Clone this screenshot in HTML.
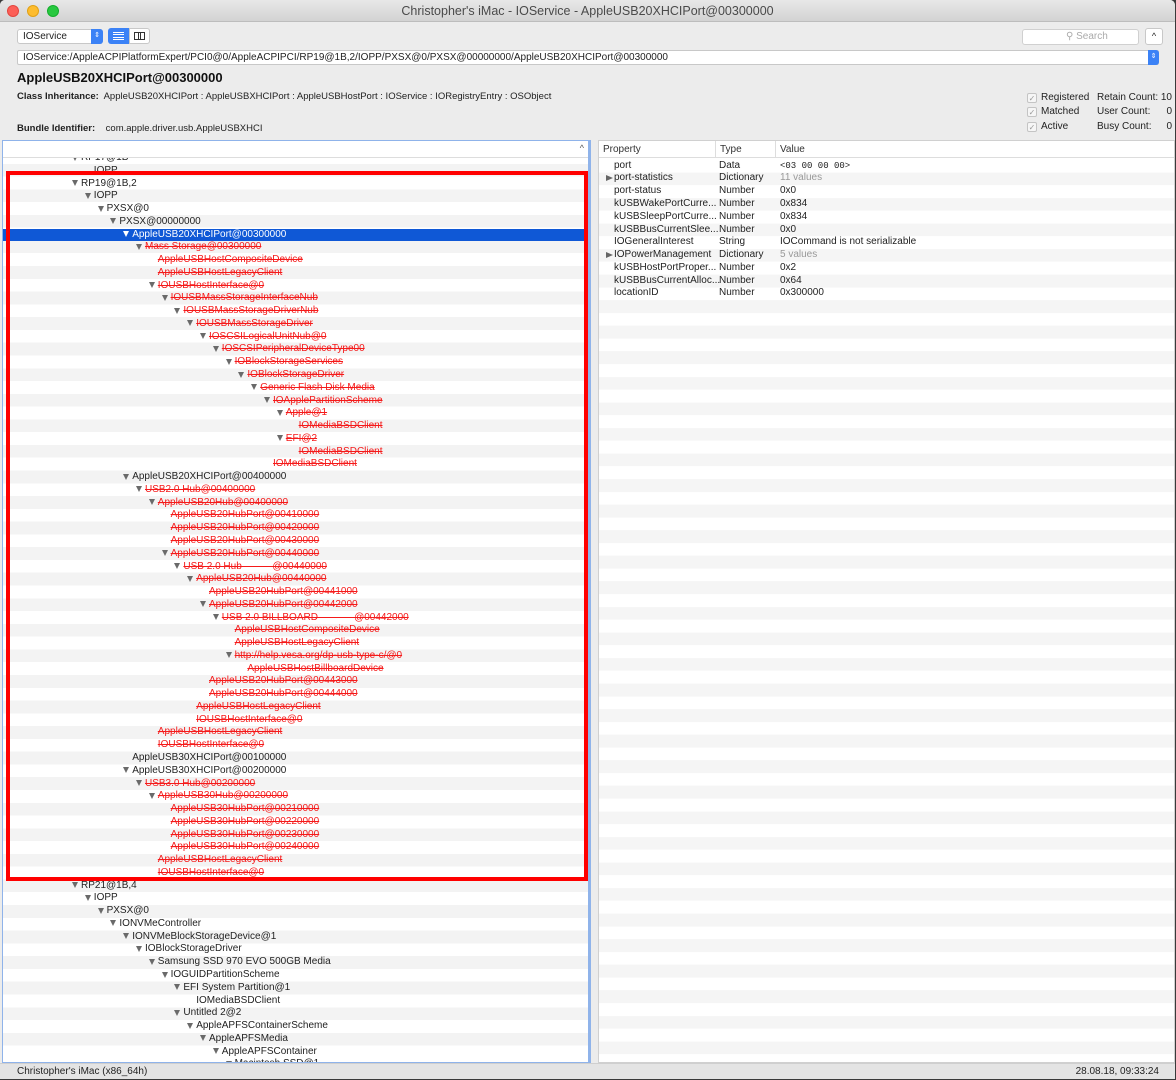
<!DOCTYPE html>
<html><head><meta charset="utf-8"><style>
*{margin:0;padding:0;box-sizing:border-box}
body{width:1176px;height:1080px;overflow:hidden;background:#3a3a3a;font-family:"Liberation Sans",sans-serif;font-size:10px;color:#222;position:relative}
.win{position:absolute;left:0;top:0;width:1175px;height:1079px;background:#ececec;border-radius:5px 5px 0 0;overflow:hidden}
.tb{position:absolute;left:0;top:0;width:100%;height:22px;background:linear-gradient(#e8e8e8,#d3d3d3);border-bottom:1px solid #bdbdbd;text-align:center;font-size:12.5px;line-height:22px;color:#4a4a4a}
.dot{position:absolute;top:5px;width:12px;height:12px;border-radius:50%}
.abs{position:absolute;white-space:nowrap}
.tree{position:absolute;left:2px;top:140px;width:589px;height:923px;background:#fff;border:1px solid #8fb3ea;border-right:3px solid #8fb3ea;overflow:hidden}
.thead{position:absolute;left:0;top:0;width:100%;height:17px;border-bottom:1px solid #ddd;background:#fff}
.tbody{position:absolute;left:0;top:17px;width:100%;height:905px;overflow:hidden;background:repeating-linear-gradient(#fff 0 12.78px,#f3f3f3 12.78px 25.56px);background-position:0 -7px}
.rows{position:absolute;left:-3px;top:-6px;width:100%}
.row{position:relative;height:12.78px;line-height:12.78px;white-space:nowrap;font-size:10px;color:#222}
.t{display:inline-block;position:relative;width:9px;height:12px;vertical-align:top;font-size:0;text-decoration:none}
.t:not(:empty)::before{content:"";position:absolute;left:0;top:2.5px;width:0;height:0;border-left:3.5px solid transparent;border-right:3.5px solid transparent;border-top:6.5px solid #6a6a6a}
.row.r{color:#f51a1a;text-decoration:line-through}
.sel{background:#0f58d6;color:#fff}
.sel .t:not(:empty)::before{border-top-color:#fff}
.l0{padding-left:72px}.l1{padding-left:84.8px}.l2{padding-left:97.6px}.l3{padding-left:110.4px}.l4{padding-left:123.2px}.l5{padding-left:136px}.l6{padding-left:148.8px}.l7{padding-left:161.6px}.l8{padding-left:174.4px}.l9{padding-left:187.2px}.l10{padding-left:200px}.l11{padding-left:212.8px}.l12{padding-left:225.6px}.l13{padding-left:238.4px}.l14{padding-left:251.2px}.l15{padding-left:264px}.l16{padding-left:276.8px}.l17{padding-left:289.6px}
.sel.l4{margin-left:3px;padding-left:120.2px}
.box{position:absolute;left:6px;top:171px;width:582px;height:710px;border:4px solid #f00}
.prop{position:absolute;left:598px;top:140px;width:577px;height:923px;background:#fff;border:1px solid #d0d0d0;overflow:hidden}
.phead{position:absolute;left:0;top:0;width:100%;height:17px;border-bottom:1px solid #ddd;background:#fff;font-size:10px;line-height:17px;color:#333}
.pbody{position:absolute;left:0;top:17px;width:100%;height:905px;background:repeating-linear-gradient(#fff 0 12.78px,#f5f5f5 12.78px 25.56px);background-position:0 1.6px}
.prow{position:absolute;left:0;width:100%;height:12.78px;line-height:12.78px;font-size:10px;white-space:nowrap}
.prow span{position:absolute}
.rt{position:absolute;left:7px;top:2.5px;width:0;height:0;border-top:3.5px solid transparent;border-bottom:3.5px solid transparent;border-left:7px solid #666}
.gray{color:#999}
.cb{display:inline-block;width:10px;height:10px;border:1px solid #c4c4c4;border-radius:2px;background:#f6f6f6;font-size:8px;line-height:9px;text-align:center;color:#999;margin-right:4px;vertical-align:-1px}
</style></head><body><div class="win">
<div class="tb">Christopher's iMac - IOService - AppleUSB20XHCIPort@00300000
<div class="dot" style="left:7px;background:#fc5f57;border:1px solid #e2463f"></div>
<div class="dot" style="left:27px;background:#fdbc2e;border:1px solid #e1a116"></div>
<div class="dot" style="left:47px;background:#28c840;border:1px solid #14ae2c"></div>
</div>
<div class="abs" style="left:17px;top:29px;width:86px;height:15px;background:#fff;border:1px solid #c8c8c8;border-radius:3px;font-size:10px;line-height:13px;padding-left:5px">IOService<div style="position:absolute;right:-1px;top:-1px;width:12px;height:15px;background:#3b82f6;border-radius:0 3px 3px 0;color:#fff;font-size:7px;line-height:14px;text-align:center">⇕</div></div>
<div class="abs" style="left:108px;top:28px;width:21px;height:16px;background:#3b82f6;border-radius:3px 0 0 3px"><div style="position:absolute;left:5px;top:4px;width:11px;height:8px;border-top:1px solid #fff;border-bottom:1px solid #fff"></div><div style="position:absolute;left:5px;top:6px;width:11px;border-top:1px solid #fff"></div><div style="position:absolute;left:5px;top:8.5px;width:11px;border-top:1px solid #fff"></div></div>
<div class="abs" style="left:129px;top:28px;width:21px;height:16px;background:#fff;border:1px solid #c8c8c8;border-radius:0 3px 3px 0"><div style="position:absolute;left:4px;top:3px;width:11px;height:8px;border:1px solid #333"></div><div style="position:absolute;left:8px;top:3px;width:3px;height:8px;border-left:1px solid #333;border-right:1px solid #333"></div></div>
<div class="abs" style="left:1022px;top:29px;width:117px;height:16px;background:#fff;border:1px solid #d0d0d0;border-radius:3px;color:#aaa;font-size:10px;line-height:14px;padding-left:43px">⚲ Search</div>
<div class="abs" style="left:1145px;top:28px;width:18px;height:17px;background:#fff;border:1px solid #c8c8c8;border-radius:3px;text-align:center;font-size:9px;line-height:15px">^</div>
<div class="abs" style="left:17px;top:50px;width:1142px;height:15px;background:#fff;border:1px solid #c8c8c8;border-radius:2px;font-size:10px;line-height:13px;padding-left:5px">IOService:/AppleACPIPlatformExpert/PCI0@0/AppleACPIPCI/RP19@1B,2/IOPP/PXSX@0/PXSX@00000000/AppleUSB20XHCIPort@00300000<div style="position:absolute;right:-1px;top:-1px;width:11px;height:15px;background:#3b82f6;border-radius:0 3px 3px 0;color:#fff;font-size:7px;line-height:14px;text-align:center">⇕</div></div>
<div class="abs" style="left:17px;top:70px;font-size:13px;font-weight:bold;color:#111">AppleUSB20XHCIPort@00300000</div>
<div class="abs" style="left:17px;top:91px;font-size:9.5px"><b>Class Inheritance:</b>&nbsp; AppleUSB20XHCIPort : AppleUSBXHCIPort : AppleUSBHostPort : IOService : IORegistryEntry : OSObject</div>
<div class="abs" style="left:17px;top:123px;font-size:9.5px"><b>Bundle Identifier:</b>&nbsp;&nbsp;&nbsp; com.apple.driver.usb.AppleUSBXHCI</div>
<div class="abs" style="left:1027px;top:91px;font-size:10px;line-height:14.3px"><span class="cb">✓</span>Registered<br><span class="cb">✓</span>Matched<br><span class="cb">✓</span>Active</div>
<div class="abs" style="left:1097px;top:91px;font-size:10px;line-height:14.3px">Retain Count:<br>User Count:<br>Busy Count:</div>
<div class="abs" style="left:1150px;top:91px;width:22px;text-align:right;font-size:10px;line-height:14.3px">10<br>0<br>0</div>

<div class="tree"><div class="thead"><div style="position:absolute;right:4px;top:2px;font-size:9px;color:#555">^</div></div>
<div class="tbody"><div class="rows">
<div class="row l0"><span class="t">▼</span>RP17@1B</div>
<div class="row l1"><span class="t"></span>IOPP</div>
<div class="row l0"><span class="t">▼</span>RP19@1B,2</div>
<div class="row l1"><span class="t">▼</span>IOPP</div>
<div class="row l2"><span class="t">▼</span>PXSX@0</div>
<div class="row l3"><span class="t">▼</span>PXSX@00000000</div>
<div class="row l4 sel"><span class="t">▼</span>AppleUSB20XHCIPort@00300000</div>
<div class="row l5 r"><span class="t">▼</span>Mass Storage@00300000</div>
<div class="row l6 r"><span class="t"></span>AppleUSBHostCompositeDevice</div>
<div class="row l6 r"><span class="t"></span>AppleUSBHostLegacyClient</div>
<div class="row l6 r"><span class="t">▼</span>IOUSBHostInterface@0</div>
<div class="row l7 r"><span class="t">▼</span>IOUSBMassStorageInterfaceNub</div>
<div class="row l8 r"><span class="t">▼</span>IOUSBMassStorageDriverNub</div>
<div class="row l9 r"><span class="t">▼</span>IOUSBMassStorageDriver</div>
<div class="row l10 r"><span class="t">▼</span>IOSCSILogicalUnitNub@0</div>
<div class="row l11 r"><span class="t">▼</span>IOSCSIPeripheralDeviceType00</div>
<div class="row l12 r"><span class="t">▼</span>IOBlockStorageServices</div>
<div class="row l13 r"><span class="t">▼</span>IOBlockStorageDriver</div>
<div class="row l14 r"><span class="t">▼</span>Generic Flash Disk Media</div>
<div class="row l15 r"><span class="t">▼</span>IOApplePartitionScheme</div>
<div class="row l16 r"><span class="t">▼</span>Apple@1</div>
<div class="row l17 r"><span class="t"></span>IOMediaBSDClient</div>
<div class="row l16 r"><span class="t">▼</span>EFI@2</div>
<div class="row l17 r"><span class="t"></span>IOMediaBSDClient</div>
<div class="row l15 r"><span class="t"></span>IOMediaBSDClient</div>
<div class="row l4"><span class="t">▼</span>AppleUSB20XHCIPort@00400000</div>
<div class="row l5 r"><span class="t">▼</span>USB2.0 Hub@00400000</div>
<div class="row l6 r"><span class="t">▼</span>AppleUSB20Hub@00400000</div>
<div class="row l7 r"><span class="t"></span>AppleUSB20HubPort@00410000</div>
<div class="row l7 r"><span class="t"></span>AppleUSB20HubPort@00420000</div>
<div class="row l7 r"><span class="t"></span>AppleUSB20HubPort@00430000</div>
<div class="row l7 r"><span class="t">▼</span>AppleUSB20HubPort@00440000</div>
<div class="row l8 r"><span class="t">▼</span>USB 2.0 Hub&nbsp;&nbsp;&nbsp;&nbsp;&nbsp;&nbsp;&nbsp;&nbsp;&nbsp;&nbsp;&nbsp;@00440000</div>
<div class="row l9 r"><span class="t">▼</span>AppleUSB20Hub@00440000</div>
<div class="row l10 r"><span class="t"></span>AppleUSB20HubPort@00441000</div>
<div class="row l10 r"><span class="t">▼</span>AppleUSB20HubPort@00442000</div>
<div class="row l11 r"><span class="t">▼</span>USB 2.0 BILLBOARD&nbsp;&nbsp;&nbsp;&nbsp;&nbsp;&nbsp;&nbsp;&nbsp;&nbsp;&nbsp;&nbsp;&nbsp;&nbsp;@00442000</div>
<div class="row l12 r"><span class="t"></span>AppleUSBHostCompositeDevice</div>
<div class="row l12 r"><span class="t"></span>AppleUSBHostLegacyClient</div>
<div class="row l12 r"><span class="t">▼</span>http://help.vesa.org/dp-usb-type-c/@0</div>
<div class="row l13 r"><span class="t"></span>AppleUSBHostBillboardDevice</div>
<div class="row l10 r"><span class="t"></span>AppleUSB20HubPort@00443000</div>
<div class="row l10 r"><span class="t"></span>AppleUSB20HubPort@00444000</div>
<div class="row l9 r"><span class="t"></span>AppleUSBHostLegacyClient</div>
<div class="row l9 r"><span class="t"></span>IOUSBHostInterface@0</div>
<div class="row l6 r"><span class="t"></span>AppleUSBHostLegacyClient</div>
<div class="row l6 r"><span class="t"></span>IOUSBHostInterface@0</div>
<div class="row l4"><span class="t"></span>AppleUSB30XHCIPort@00100000</div>
<div class="row l4"><span class="t">▼</span>AppleUSB30XHCIPort@00200000</div>
<div class="row l5 r"><span class="t">▼</span>USB3.0 Hub@00200000</div>
<div class="row l6 r"><span class="t">▼</span>AppleUSB30Hub@00200000</div>
<div class="row l7 r"><span class="t"></span>AppleUSB30HubPort@00210000</div>
<div class="row l7 r"><span class="t"></span>AppleUSB30HubPort@00220000</div>
<div class="row l7 r"><span class="t"></span>AppleUSB30HubPort@00230000</div>
<div class="row l7 r"><span class="t"></span>AppleUSB30HubPort@00240000</div>
<div class="row l6 r"><span class="t"></span>AppleUSBHostLegacyClient</div>
<div class="row l6 r"><span class="t"></span>IOUSBHostInterface@0</div>
<div class="row l0"><span class="t">▼</span>RP21@1B,4</div>
<div class="row l1"><span class="t">▼</span>IOPP</div>
<div class="row l2"><span class="t">▼</span>PXSX@0</div>
<div class="row l3"><span class="t">▼</span>IONVMeController</div>
<div class="row l4"><span class="t">▼</span>IONVMeBlockStorageDevice@1</div>
<div class="row l5"><span class="t">▼</span>IOBlockStorageDriver</div>
<div class="row l6"><span class="t">▼</span>Samsung SSD 970 EVO 500GB Media</div>
<div class="row l7"><span class="t">▼</span>IOGUIDPartitionScheme</div>
<div class="row l8"><span class="t">▼</span>EFI System Partition@1</div>
<div class="row l9"><span class="t"></span>IOMediaBSDClient</div>
<div class="row l8"><span class="t">▼</span>Untitled 2@2</div>
<div class="row l9"><span class="t">▼</span>AppleAPFSContainerScheme</div>
<div class="row l10"><span class="t">▼</span>AppleAPFSMedia</div>
<div class="row l11"><span class="t">▼</span>AppleAPFSContainer</div>
<div class="row l12"><span class="t">▼</span>Macintosh SSD@1</div>
</div></div></div>
<div class="box"></div>

<div class="prop"><div class="phead"><span style="position:absolute;left:4px">Property</span><span style="position:absolute;left:116px;border-left:1px solid #ddd;padding-left:4px;height:17px">Type</span><span style="position:absolute;left:176px;border-left:1px solid #ddd;padding-left:4px;height:17px">Value</span></div>
<div class="pbody">
<div class="prow" style="top:1.6px"><span style="left:15px">port</span><span style="left:120px">Data</span><span style="left:181px;font-family:'Liberation Mono',monospace;font-size:9px">&lt;03 00 00 00&gt;</span></div>
<div class="prow" style="top:14.4px"><i class="rt"></i><span style="left:15px">port-statistics</span><span style="left:120px">Dictionary</span><span style="left:181px" class="gray">11 values</span></div>
<div class="prow" style="top:27.2px"><span style="left:15px">port-status</span><span style="left:120px">Number</span><span style="left:181px">0x0</span></div>
<div class="prow" style="top:39.9px"><span style="left:15px">kUSBWakePortCurre...</span><span style="left:120px">Number</span><span style="left:181px">0x834</span></div>
<div class="prow" style="top:52.7px"><span style="left:15px">kUSBSleepPortCurre...</span><span style="left:120px">Number</span><span style="left:181px">0x834</span></div>
<div class="prow" style="top:65.5px"><span style="left:15px">kUSBBusCurrentSlee...</span><span style="left:120px">Number</span><span style="left:181px">0x0</span></div>
<div class="prow" style="top:78.3px"><span style="left:15px">IOGeneralInterest</span><span style="left:120px">String</span><span style="left:181px">IOCommand is not serializable</span></div>
<div class="prow" style="top:91.1px"><i class="rt"></i><span style="left:15px">IOPowerManagement</span><span style="left:120px">Dictionary</span><span style="left:181px" class="gray">5 values</span></div>
<div class="prow" style="top:103.8px"><span style="left:15px">kUSBHostPortProper...</span><span style="left:120px">Number</span><span style="left:181px">0x2</span></div>
<div class="prow" style="top:116.6px"><span style="left:15px">kUSBBusCurrentAlloc...</span><span style="left:120px">Number</span><span style="left:181px">0x64</span></div>
<div class="prow" style="top:129.4px"><span style="left:15px">locationID</span><span style="left:120px">Number</span><span style="left:181px">0x300000</span></div>
</div></div>

<div class="abs" style="left:0;top:1063px;width:1175px;height:17px;background:#e4e4e4;border-top:1px solid #cfcfcf"></div>
<div class="abs" style="left:17px;top:1066px;font-size:10px">Christopher's iMac (x86_64h)</div>
<div class="abs" style="right:16px;top:1066px;font-size:10px">28.08.18, 09:33:24</div>
</div></body></html>
